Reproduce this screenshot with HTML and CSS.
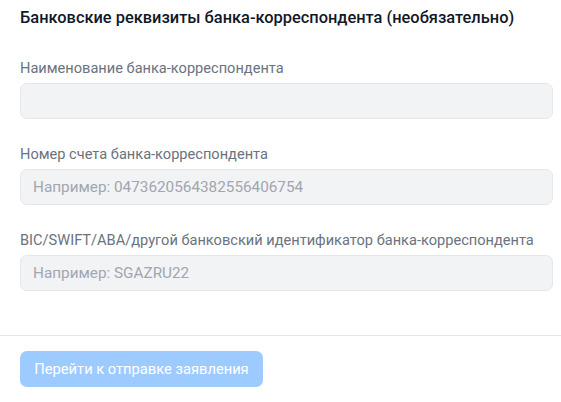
FILE: index.html
```html
<!DOCTYPE html>
<html lang="ru">
<head>
<meta charset="utf-8">
<link rel="stylesheet" href="styles.css">
</head>
<body>
<section class="form">
  <h2 class="title">Банковские реквизиты банка-корреспондента (необязательно)</h2>
  <div class="fields">
    <label class="field">
      <span class="label">Наименование банка-корреспондента</span>
      <input class="input" type="text">
    </label>
    <label class="field">
      <span class="label">Номер счета банка-корреспондента</span>
      <input class="input" type="text" placeholder="Например: 0473620564382556406754">
    </label>
    <label class="field">
      <span class="label">BIC/SWIFT/ABA/другой банковский идентификатор банка-корреспондента</span>
      <input class="input" type="text" placeholder="Например: SGAZRU22">
    </label>
  </div>
</section>
<footer class="footer">
  <button class="btn" type="button" disabled>Перейти к отправке заявления</button>
</footer>
</body>
</html>
```
FILE: styles.css
```css
html, body {
  margin: 0;
  padding: 0;
  background: #ffffff;
  font-family: Roboto, "Liberation Sans", Arial, sans-serif;
}
.form {
  padding: 8px 8px 0 20px;
}
.title {
  margin: 0;
  font-size: 16.4px;
  line-height: 20px;
  font-weight: 500;
  color: #111827;
}
.fields {
  display: flex;
  flex-direction: column;
  gap: 25px;
  padding-top: 30px;
  padding-bottom: 44px;
}
.field {
  display: flex;
  flex-direction: column;
  gap: 5px;
}
.label {
  font-size: 14.6px;
  line-height: 20px;
  color: #6b7280;
}
.input {
  box-sizing: border-box;
  height: 36px;
  width: 100%;
  margin: 0;
  padding: 0 12px;
  border: 1px solid #e5e7eb;
  border-radius: 7px;
  background: #f2f3f5;
  font-family: inherit;
  font-size: 15.3px;
  color: #111827;
  outline: none;
}
.input::placeholder {
  color: #a1a6b0;
}
.footer {
  border-top: 1px solid #e5e7eb;
  padding: 15px 20px;
}
.btn {
  height: 36px;
  width: 243px;
  border: none;
  border-radius: 7px;
  background: #9ecbff;
  color: #ffffff;
  font-family: inherit;
  font-size: 14.7px;
  font-weight: 400;
  padding: 0;
}
```
